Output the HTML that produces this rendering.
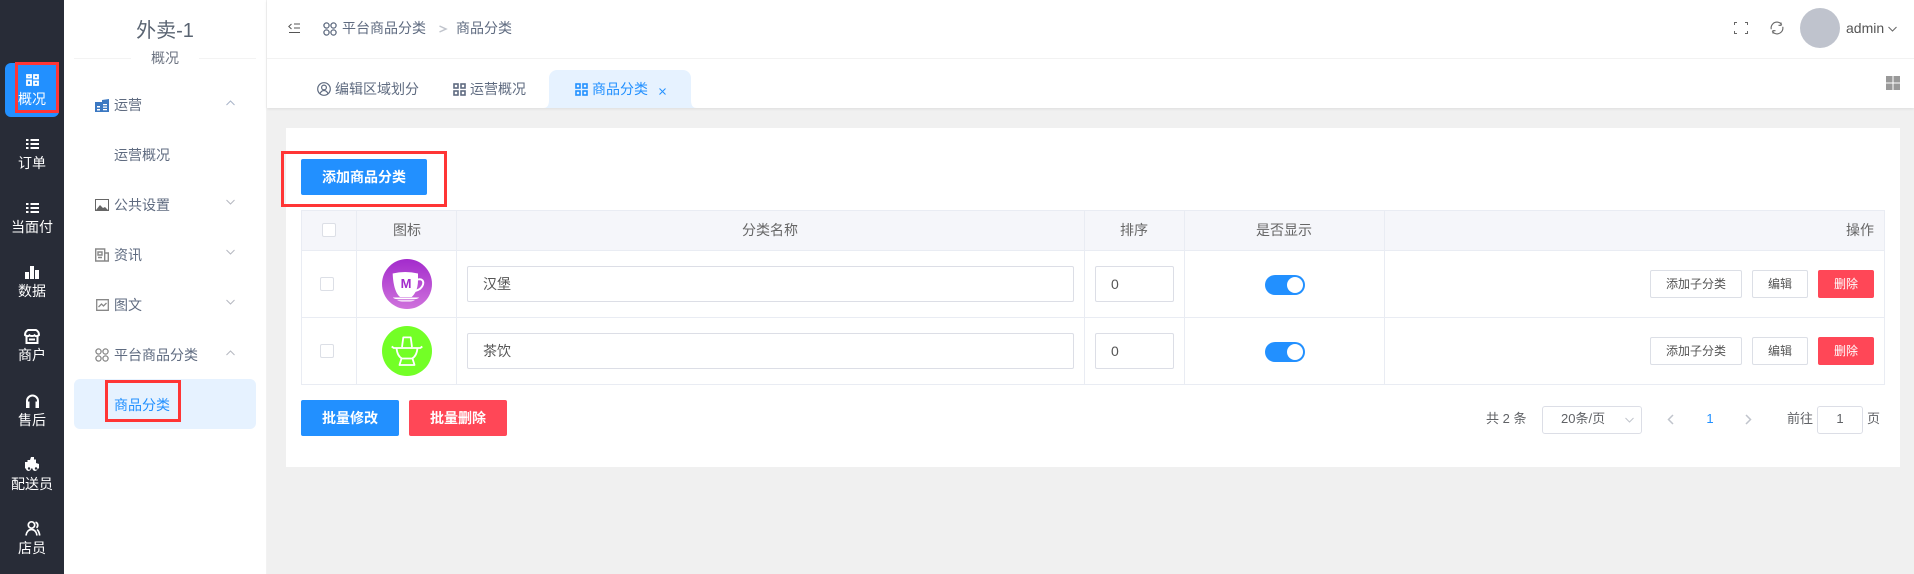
<!DOCTYPE html>
<html lang="zh-CN"><head><meta charset="utf-8"><title>商品分类</title>
<style>
html,body{margin:0;padding:0}
body{width:1914px;height:574px;position:relative;overflow:hidden;background:#f0f0f0;font-family:"Liberation Sans","Noto Sans CJK SC",sans-serif;font-size:14px;color:#606266}
.a,.t,svg{position:absolute}
.t{white-space:nowrap;line-height:20px}
.c{transform:translateX(-50%)}
.n{color:#fff;font-size:14px}
.m{color:#5f6b80;font-size:14px}
.cell{position:absolute;background:#e9ecf3}
.inp{position:absolute;box-sizing:border-box;height:36px;background:#fff;border:1px solid #dcdee6;border-radius:2px}
.btn{position:absolute;box-sizing:border-box;text-align:center;border-radius:2px}
.o{height:28px;line-height:26px;border:1px solid #dcdfe6;background:#fff;font-size:12px;color:#555}
.r{height:28px;line-height:28px;background:#ff4757;color:#fff;font-size:12px}
.cb{position:absolute;box-sizing:border-box;width:14px;height:14px;background:#fff;border:1px solid #dcdfe6;border-radius:2px}
.sw{position:absolute;width:40px;height:20px;border-radius:10px;background:#2290ff}
.sw:after{content:"";position:absolute;right:2px;top:2px;width:16px;height:16px;border-radius:50%;background:#fff}
.red{position:absolute;box-sizing:border-box;border:3px solid #ff3535}
svg{overflow:visible;fill:none}
</style></head><body>

<!-- dark rail -->
<div class="a" style="left:0;top:0;width:64px;height:574px;background:#282c37"></div>
<div class="a" style="left:5px;top:63px;width:54px;height:54px;background:#2290ff;border-radius:6px"></div>
<div class="red" style="left:15px;top:62px;width:44px;height:51px"></div>

<svg style="left:26px;top:74px" width="13" height="12" stroke="#fff" stroke-width="1.800"><rect x="1" y="1" width="4" height="2.500"/><rect x="8" y="1" width="4" height="3.500"/><rect x="1" y="6.500" width="4" height="4.500"/><rect x="8" y="7.500" width="4" height="3.500"/></svg>
<div class="t n c" style="left:32px;top:89px">概况</div>

<svg style="left:26px;top:138px" width="13" height="12" stroke="#fff" stroke-width="2"><path d="M0 2h2.500M4.500 2H13M0 6h2.500M4.500 6H13M0 10h2.500M4.500 10H13"/></svg>
<div class="t n c" style="left:32px;top:153px">订单</div>

<svg style="left:26px;top:202px" width="13" height="12" stroke="#fff" stroke-width="2"><path d="M0 2h2.500M4.500 2H13M0 6h2.500M4.500 6H13M0 10h2.500M4.500 10H13"/></svg>
<div class="t n c" style="left:32px;top:217px">当面付</div>

<svg style="left:25px;top:266px" width="14" height="13"><path fill="#fff" d="M0 6h4v7H0zM5 0h4v13H5zM10 4h4v9h-4z"/></svg>
<div class="t n c" style="left:32px;top:281px">数据</div>

<svg style="left:24px;top:329px" width="16" height="15" stroke="#fff" stroke-width="2"><path d="M4 1h8c2 1 3 3 3 5-1.500 1.500-3.500 1.500-4.500.3-1 1-4 1-5 0C4.500 7.500 2.500 7.500 1 6c0-2 1-4 3-5zM2.500 7.500V14h11V7.500M5 10.500h6"/></svg>
<div class="t n c" style="left:32px;top:345px">商户</div>

<svg style="left:25px;top:394px" width="15" height="14" stroke="#fff" stroke-width="2"><path d="M2 9V7a5.500 5.500 0 0 1 11 0v2"/><path fill="#fff" stroke="none" d="M1 7.500h3.500V14H1zM10.500 7.500H14V14h-3.500z"/></svg>
<div class="t n c" style="left:32px;top:410px">售后</div>

<svg style="left:25px;top:457px" width="15" height="14"><path fill="#fff" d="M6 0h3v2.500h2V6l3 1v4.500h-1.500a2.500 2.500 0 0 1-5 0h-1.500a2.500 2.500 0 0 1-5 0H0V5h2.500V3H5z"/><circle cx="4" cy="11.500" r="1.200" fill="#282c37"/><circle cx="11" cy="11.500" r="1.200" fill="#282c37"/></svg>
<div class="t n c" style="left:32px;top:474px">配送员</div>

<svg style="left:25px;top:521px" width="15" height="15" stroke="#fff" stroke-width="1.700"><circle cx="6.500" cy="4" r="3.200"/><path d="M1 14.500c.5-3.500 2.500-6 5.500-6s5 2.500 5.500 6M10.500 1.200a3.200 3.200 0 0 1 1 5.600M12 8.500c1.300 1 2.300 3 2.700 6"/></svg>
<div class="t n c" style="left:32px;top:538px">店员</div>

<!-- second sidebar -->
<div class="a" style="left:64px;top:0;width:202px;height:574px;background:#fff"></div>
<div class="a" style="left:266px;top:0;width:1px;height:574px;background:#f2f2f2"></div>
<div class="t c" style="left:165px;top:21px;font-size:20px;color:#5a6472">外卖-1</div>
<div class="a" style="left:74px;top:58px;width:182px;height:1px;background:#f3f3f3"></div>
<div class="a" style="left:131px;top:50px;width:68px;height:16px;background:#fff"></div>
<div class="t c" style="left:165px;top:48px;color:#6b7280">概况</div>

<svg style="left:95px;top:99px" width="14" height="13"><path fill="#3b78c2" d="M0 3h7V1l7-1v13H0z"/><path fill="#fff" d="M2 7h3v1.500H2zM2 10h3v1.500H2zM8 5h4v1.200H8zM8 7.500h4v1.200H8zM8 10h4v1.200H8z"/></svg>
<div class="t m" style="left:114px;top:95px">运营</div>
<svg style="left:226px;top:100px" width="9" height="6" stroke="#a8b4c8"><path d="M.5 5L4.500 1l4 4"/></svg>
<div class="t m" style="left:114px;top:145px">运营概况</div>

<svg style="left:95px;top:199px" width="14" height="12"><rect x=".5" y=".5" width="13" height="11" fill="#fff" stroke="#666"/><path fill="#666" d="M1 11l4-5 3 3 2-1 3 3z"/></svg>
<div class="t m" style="left:114px;top:195px">公共设置</div>
<svg style="left:226px;top:199px" width="9" height="6" stroke="#b5b8c0"><path d="M.5 1l4 4 4-4"/></svg>

<svg style="left:95px;top:248px" width="14" height="14" stroke="#888" stroke-width="1.400"><path d="M.7 1h9v12h-9zM10 5h3.300v8H1"/><path d="M3 4h4v3H3zM3 9.500h4"/></svg>
<div class="t m" style="left:114px;top:245px">资讯</div>
<svg style="left:226px;top:249px" width="9" height="6" stroke="#b5b8c0"><path d="M.5 1l4 4 4-4"/></svg>

<svg style="left:96px;top:299px" width="13" height="12" stroke="#888" stroke-width="1.300"><path d="M.7.700h11.600v10.600H.7zM2.500 8l3-3 2 2 3-3"/></svg>
<div class="t m" style="left:114px;top:295px">图文</div>
<svg style="left:226px;top:299px" width="9" height="6" stroke="#b5b8c0"><path d="M.5 1l4 4 4-4"/></svg>

<svg style="left:95px;top:348px" width="14" height="14" stroke="#888" stroke-width="1.300"><circle cx="3.500" cy="3.500" r="2.600"/><circle cx="10.500" cy="3.500" r="2.600"/><circle cx="3.500" cy="10.500" r="2.600"/><circle cx="10.500" cy="10.500" r="2.600"/></svg>
<div class="t m" style="left:114px;top:345px">平台商品分类</div>
<svg style="left:226px;top:350px" width="9" height="6" stroke="#b5b8c0"><path d="M.5 5L4.500 1l4 4"/></svg>

<div class="a" style="left:74px;top:379px;width:182px;height:50px;background:#e6f2ff;border-radius:6px"></div>
<div class="t" style="left:114px;top:395px;color:#2290ff">商品分类</div>
<div class="red" style="left:105px;top:380px;width:76px;height:42px"></div>

<!-- header -->
<div class="a" style="left:267px;top:0;width:1647px;height:108px;background:#fff;box-shadow:0 1px 3px rgba(0,0,0,.08)"></div>
<div class="a" style="left:267px;top:58px;width:1647px;height:1px;background:#f2f2f2"></div>
<svg style="left:288px;top:22px" width="13" height="12" stroke="#555"><path d="M3.500 2L.8 4.500 3.500 7M6 2h6M6 6h6M1 10.500h11"/></svg>
<svg style="left:323px;top:22px" width="14" height="14" stroke="#5f6b80" stroke-width="1.300"><circle cx="3.500" cy="3.500" r="2.600"/><circle cx="10.500" cy="3.500" r="2.600"/><circle cx="3.500" cy="10.500" r="2.600"/><circle cx="10.500" cy="10.500" r="2.600"/></svg>
<div class="t m" style="left:342px;top:18px">平台商品分类</div>
<svg style="left:439px;top:25px" width="8" height="8" stroke="#c0c4cc" stroke-width="1.500"><path d="M.5 1L7 4 .5 7"/></svg>
<div class="t m" style="left:456px;top:18px">商品分类</div>

<svg style="left:1734px;top:22px" width="14" height="12" stroke="#666" stroke-width="1"><path d="M.5 3V.5h2.500M11 .5h2.500V3M13.500 9v2.500H11M3 11.500H.5V9"/></svg>
<svg style="left:1770px;top:21px" width="14" height="14" stroke="#666" stroke-width="1.100"><circle cx="7" cy="7" r="5.900"/><path stroke="#fff" stroke-width="2.200" d="M12 3.500l1.600 2M2 10.500l-1.600-2"/><path d="M11 1.500v2.800H8.500M3 12.500V9.700h2.500"/></svg>
<div class="a" style="left:1800px;top:8px;width:40px;height:40px;border-radius:50%;background:#bfc3cd"></div>
<div class="t" style="left:1846px;top:18px;font-size:14px;color:#555">admin</div>
<svg style="left:1888px;top:26px" width="9" height="6" stroke="#666"><path d="M.5 1l4 4 4-4"/></svg>

<!-- tabs -->
<svg style="left:317px;top:82px" width="14" height="14" stroke="#5f6b80" stroke-width="1.200"><circle cx="7" cy="7" r="6.300"/><circle cx="7" cy="5.500" r="2.400"/><path d="M3 11.500c1-2 2.400-3 4-3s3 1 4 3"/></svg>
<div class="t m" style="left:335px;top:79px">编辑区域划分</div>
<svg style="left:453px;top:83px" width="13" height="13" stroke="#5f6b80" stroke-width="1.600"><rect x="1" y="1" width="4" height="4"/><rect x="8" y="1" width="4" height="4"/><rect x="1" y="8" width="4" height="4"/><rect x="8" y="8" width="4" height="4"/></svg>
<div class="t m" style="left:470px;top:79px">运营概况</div>
<div class="a" style="left:549px;top:70px;width:142px;height:38px;background:#e6f2ff;border-radius:8px 8px 0 0"></div>
<svg style="left:543px;top:100px" width="154" height="8"><path fill="#e6f2ff" d="M0 8C4 8 6 6 6 0h142c0 6 2 8 6 8z"/></svg>
<svg style="left:575px;top:83px" width="13" height="13" stroke="#2290ff" stroke-width="1.600"><rect x="1" y="1" width="4" height="4"/><rect x="8" y="1" width="4" height="4"/><rect x="1" y="8" width="4" height="4"/><rect x="8" y="8" width="4" height="4"/></svg>
<div class="t" style="left:592px;top:79px;color:#2290ff">商品分类</div>
<svg style="left:659px;top:88px" width="7" height="7" stroke="#2290ff"><path d="M.5.500l6 6M6.500.500l-6 6"/></svg>
<svg style="left:1886px;top:76px" width="14" height="14"><path fill="#999" d="M0 0h6.500v6.500H0zM7.500 0H14v6.500H7.500zM0 7.500h6.500V14H0zM7.500 7.500H14V14H7.500z"/></svg>

<!-- panel -->
<div class="a" style="left:286px;top:128px;width:1614px;height:339px;background:#fff"></div>
<div class="btn" style="left:301px;top:159px;width:126px;height:36px;line-height:36px;background:#2290ff;color:#fff;font-size:14px;font-weight:700">添加商品分类</div>
<div class="red" style="left:281px;top:151px;width:166px;height:56px"></div>

<!-- table -->
<div class="a" style="left:301px;top:210px;width:1584px;height:41px;background:#f5f6fa"></div>
<div class="cell" style="left:301px;top:210px;width:1584px;height:1px"></div>
<div class="cell" style="left:301px;top:250px;width:1584px;height:1px"></div>
<div class="cell" style="left:301px;top:317px;width:1584px;height:1px"></div>
<div class="cell" style="left:301px;top:384px;width:1584px;height:1px"></div>
<div class="cell" style="left:301px;top:210px;width:1px;height:175px"></div>
<div class="cell" style="left:356px;top:210px;width:1px;height:175px"></div>
<div class="cell" style="left:456px;top:210px;width:1px;height:175px"></div>
<div class="cell" style="left:1084px;top:210px;width:1px;height:175px"></div>
<div class="cell" style="left:1184px;top:210px;width:1px;height:175px"></div>
<div class="cell" style="left:1384px;top:210px;width:1px;height:175px"></div>
<div class="cell" style="left:1884px;top:210px;width:1px;height:175px"></div>

<div class="cb" style="left:322px;top:223px"></div>
<div class="t c" style="left:407px;top:220px;color:#666">图标</div>
<div class="t c" style="left:770px;top:220px;color:#666">分类名称</div>
<div class="t c" style="left:1134px;top:220px;color:#666">排序</div>
<div class="t c" style="left:1284px;top:220px;color:#666">是否显示</div>
<div class="t" style="left:1846px;top:220px;color:#666">操作</div>

<!-- row 1 -->
<div class="cb" style="left:320px;top:277px"></div>
<svg style="left:382px;top:259px" width="50" height="50">
<defs><linearGradient id="g" x1="0" y1="0" x2="0" y2="1"><stop offset="0" stop-color="#a32bcc"/><stop offset="1" stop-color="#cf72dc"/></linearGradient></defs>
<circle cx="25" cy="25" r="25" fill="url(#g)"/>
<path fill="#fff" d="M10.700 14.500Q23 11.500 36 14.500V21C36 30 33 35 29.700 38H18C13 34 11 24 10.700 14.500z"/>
<path stroke="#fff" stroke-width="2" d="M36 20.500C40 19.500 42 22 41 25.500 40 29 37 31 33 32"/>
<path fill="#fff" d="M11 38.500h26c-.5 1-2 1.500-5 1.800H16c-3-.3-4.500-.8-5-1.800zM15 41.300h18c-1.500.8-3.500 1.200-5 1.200h-8c-1.500 0-3.500-.4-5-1.200z"/>
<text x="24" y="29" text-anchor="middle" font-family="Liberation Sans" font-weight="700" font-size="13" fill="#a32bcc">M</text>
</svg>
<div class="inp" style="left:467px;top:266px;width:607px"></div>
<div class="t" style="left:483px;top:274px;color:#555">汉堡</div>
<div class="inp" style="left:1095px;top:266px;width:79px"></div>
<div class="t" style="left:1111px;top:274px;color:#555">0</div>
<div class="sw" style="left:1265px;top:275px"></div>
<div class="btn o" style="left:1650px;top:270px;width:92px">添加子分类</div>
<div class="btn o" style="left:1752px;top:270px;width:56px">编辑</div>
<div class="btn r" style="left:1818px;top:270px;width:56px">删除</div>

<!-- row 2 -->
<div class="cb" style="left:320px;top:344px"></div>
<svg style="left:382px;top:326px" width="50" height="50">
<circle cx="25" cy="25" r="25" fill="#73ff26"/>
<g stroke="#fff" stroke-width="1.800" fill="none" stroke-linejoin="round"><path d="M20 21l1.300-9.600h7.400L30 21M9.700 20.500l2 1.500h26.600l2-1.500M14.500 22c.5 5 2.500 9 5.500 10.500h10c3-1.500 5-5.500 5.500-10.500M19.500 32.500l-2 6.500h15l-2-6.500"/></g>
</svg>
<div class="inp" style="left:467px;top:333px;width:607px"></div>
<div class="t" style="left:483px;top:341px;color:#555">茶饮</div>
<div class="inp" style="left:1095px;top:333px;width:79px"></div>
<div class="t" style="left:1111px;top:341px;color:#555">0</div>
<div class="sw" style="left:1265px;top:342px"></div>
<div class="btn o" style="left:1650px;top:337px;width:92px">添加子分类</div>
<div class="btn o" style="left:1752px;top:337px;width:56px">编辑</div>
<div class="btn r" style="left:1818px;top:337px;width:56px">删除</div>

<!-- bottom -->
<div class="btn" style="left:301px;top:400px;width:98px;height:36px;line-height:36px;background:#2290ff;color:#fff;font-weight:700">批量修改</div>
<div class="btn" style="left:409px;top:400px;width:98px;height:36px;line-height:36px;background:#ff4757;color:#fff;font-weight:700">批量删除</div>

<div class="t" style="left:1486px;top:409px;font-size:13px;color:#606266">共 2 条</div>
<div class="inp" style="left:1542px;top:406px;width:100px;height:28px;border-radius:3px"></div>
<div class="t" style="left:1561px;top:409px;font-size:13px;color:#606266">20条/页</div>
<svg style="left:1625px;top:417px" width="9" height="6" stroke="#c0c4cc"><path d="M.5 1l4 4 4-4"/></svg>
<svg style="left:1667px;top:414px" width="7" height="11" stroke="#c0c4cc" stroke-width="1.500"><path d="M6 1L1.500 5.500 6 10"/></svg>
<div class="t c" style="left:1710px;top:409px;font-size:13px;color:#2290ff">1</div>
<svg style="left:1745px;top:414px" width="7" height="11" stroke="#c0c4cc" stroke-width="1.500"><path d="M1 1l4.500 4.500L1 10"/></svg>
<div class="t" style="left:1787px;top:409px;font-size:13px;color:#606266">前往</div>
<div class="inp" style="left:1817px;top:406px;width:46px;height:28px;border-radius:3px"></div>
<div class="t c" style="left:1840px;top:409px;font-size:13px;color:#606266">1</div>
<div class="t" style="left:1867px;top:409px;font-size:13px;color:#606266">页</div>

</body></html>
